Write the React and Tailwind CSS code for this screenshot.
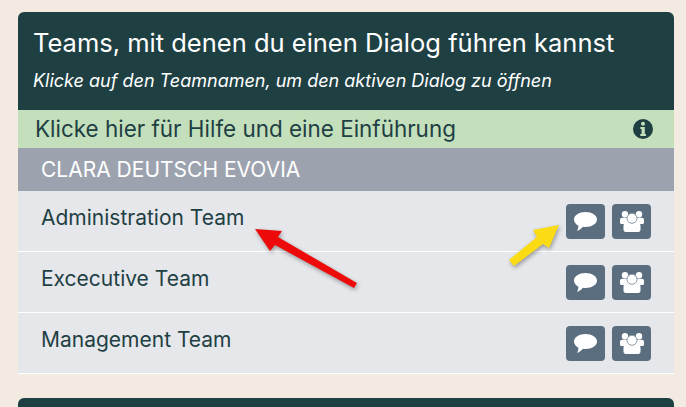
const teams = ["Administration Team", "Excecutive Team", "Management Team"];

function CommentIcon() {
  return (
    <svg viewBox="0 0 23 19" className="h-[19px] w-[23px]" fill="#fff">
      <path d="M11.500 0C17.900 0 23 3.300 23 7.500S17.900 15 11.500 15c-.9 0-1.800-.1-2.600-.2C7.600 16.700 5.300 18.400 2.900 19c.8-1.300 1.500-3 1.500-5.300C1.700 12.300 0 10.100 0 7.500 0 3.300 5.100 0 11.500 0z" />
    </svg>
  );
}

function InfoIcon() {
  return (
    <svg viewBox="0 0 20 20" className="h-[20px] w-[20px]">
      <circle cx="10" cy="10" r="10" fill="#1f4043" />
      <circle cx="10" cy="4.800" r="2" fill="#c3dfbc" />
      <path fill="#c3dfbc" d="M7.300 8h4.500v7h1.200v1.900H7.300V15h1.300v-5.100H7.300z" />
    </svg>
  );
}

function GroupIcon() {
  return (
    <svg viewBox="0 0 24 21" className="h-[21px] w-[24px]" fill="#fff">
      <circle cx="5" cy="3.200" r="3.200" />
      <circle cx="19" cy="3.200" r="3.200" />
      <path d="M0 9c0-1.300.9-2.200 2.200-2.200H8v6.200H1.200C.5 13 0 12.500 0 11.800zM24 9c0-1.300-.9-2.200-2.200-2.200H16v6.200h6.800c.7 0 1.200-.5 1.200-1.200z" />
      <path d="M3.500 15c0-2.800 1.800-4.500 4-4.500h9c2.200 0 4 1.700 4 4.500v3.400c0 1.500-1 2.600-2.600 2.600H6.100c-1.600 0-2.600-1.100-2.600-2.600z" />
      <circle cx="12" cy="7.300" r="5" stroke="#8a9aa8" strokeWidth="1" />
    </svg>
  );
}

function TeamRow({ name }) {
  return (
    <div className="flex h-[61px] items-start justify-between border-b border-white bg-[#e5e7eb] px-[23px] pt-[13px]">
      <span className="text-[21px] leading-[28px] text-[#1f4043]">{name}</span>
      <div className="flex gap-[7px]">
        <button className="flex h-[35px] w-[39px] items-center justify-center rounded bg-[#5a6e80]">
          <CommentIcon />
        </button>
        <button className="flex h-[35px] w-[39px] items-center justify-center rounded bg-[#5a6e80]">
          <GroupIcon />
        </button>
      </div>
    </div>
  );
}

function Arrows() {
  return (
    <svg className="pointer-events-none absolute left-0 top-0 h-[407px] w-[686px] drop-shadow-[1px_2px_2px_rgba(0,0,0,0.35)]">
      <polygon
        fill="#ec0a0a"
        points="255,229 282,231 278,237 357,283 354,288 275,245 270,251"
      />
      <polygon
        fill="#fbdc14"
        points="559,225 533,230 537,237 509,260 514,266 543,244 549,248"
      />
    </svg>
  );
}

export default function App() {
  return (
    <div className="relative h-[407px] w-[686px] overflow-hidden bg-[#f3ebe1] pl-[18px] pr-3 pt-3 font-['Inter',sans-serif]">
      <div className="overflow-hidden rounded-t-md">
        <div className="h-[98px] bg-[#1f4043] px-4 pt-[13px] text-white">
          <h2 className="-ml-px text-[25.500px] leading-[36px]">
            Teams, mit denen du einen Dialog führen kannst
          </h2>
          <p className="-ml-px mt-[8px] text-[18px] italic leading-6">
            Klicke auf den Teamnamen, um den aktiven Dialog zu öffnen
          </p>
        </div>
        <div className="flex h-[38px] items-center justify-between bg-[#c3dfbc] pl-[17px] pr-[21px] text-[#1f4043]">
          <span className="text-[22.450px] leading-[38px]">
            Klicke hier für Hilfe und eine Einführung
          </span>
          <InfoIcon />
        </div>
        <div className="flex h-[43px] items-center bg-[#9ca3af] pl-[23px] text-[21px] text-white">
          CLARA DEUTSCH EVOVIA
        </div>
      </div>
      {teams.map((name) => (
        <TeamRow key={name} name={name} />
      ))}
      <div className="mt-6 h-10 rounded-t-md bg-[#1f4043]" />
      <Arrows />
    </div>
  );
}
